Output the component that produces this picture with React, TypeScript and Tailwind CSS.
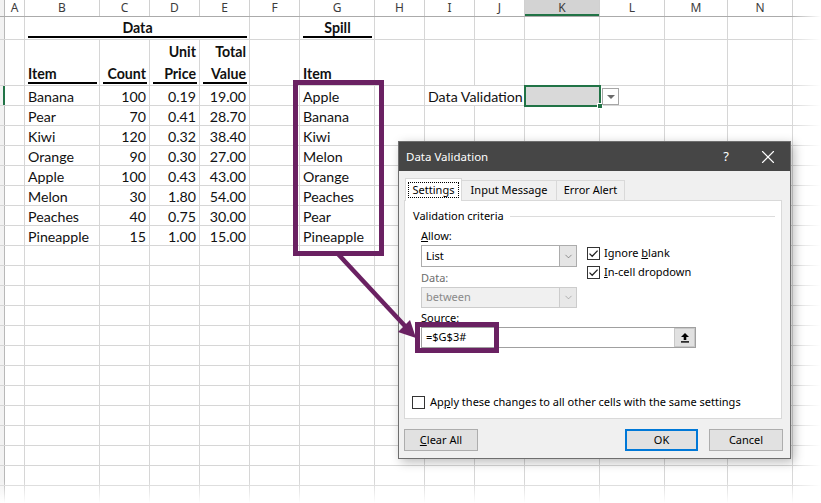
import React from 'react';
import { X, ChevronDown } from 'lucide-react';

const CELL = 'shrink-0 h-full border-r border-[#d6d6d6]';

type R = { item: string; count: string; price: string; total: string; spill: string; sel?: boolean };

const rows: R[] = [
  { item: 'Banana', count: '100', price: '0.19', total: '19.00', spill: 'Apple', sel: true },
  { item: 'Pear', count: '70', price: '0.41', total: '28.70', spill: 'Banana' },
  { item: 'Kiwi', count: '120', price: '0.32', total: '38.40', spill: 'Kiwi' },
  { item: 'Orange', count: '90', price: '0.30', total: '27.00', spill: 'Melon' },
  { item: 'Apple', count: '100', price: '0.43', total: '43.00', spill: 'Orange' },
  { item: 'Melon', count: '30', price: '1.80', total: '54.00', spill: 'Peaches' },
  { item: 'Peaches', count: '40', price: '0.75', total: '30.00', spill: 'Pear' },
  { item: 'Pineapple', count: '15', price: '1.00', total: '15.00', spill: 'Pineapple' },
];

function Rh({ sel }: { sel?: boolean }) {
  return (
    <div
      className={`w-[5px] shrink-0 h-full bg-[#f2f2f2] ${sel ? 'border-r-2 border-[#217346]' : 'border-r border-[#b8b8b8]'}`}
    />
  );
}

function E({ w }: { w: string }) {
  return <div className={`${w} ${CELL}`} />;
}

function Tail() {
  return (
    <>
      <E w="w-[65px]" />
      <E w="w-[63px]" />
      <E w="w-[65px]" />
      <E w="w-[28px]" />
    </>
  );
}

function ColHeader() {
  const cols: [string, string][] = [
    ['A', 'w-[20px]'],
    ['B', 'w-[75px]'],
    ['C', 'w-[50px]'],
    ['D', 'w-[50px]'],
    ['E', 'w-[50px]'],
    ['F', 'w-[50px]'],
    ['G', 'w-[75px]'],
    ['H', 'w-[50px]'],
    ['I', 'w-[50px]'],
    ['J', 'w-[50px]'],
    ['K', 'w-[75px]'],
    ['L', 'w-[65px]'],
    ['M', 'w-[63px]'],
    ['N', 'w-[65px]'],
    ['', 'w-[28px]'],
  ];
  return (
    <div className="flex h-[17px] border-b border-[#ababab] bg-white font-['Noto_Sans'] text-[12px] leading-[16px] text-[#3c3c3c]">
      <div className="w-[5px] shrink-0 h-full bg-[#f2f2f2] border-r border-[#b8b8b8]" />
      {cols.map(([l, w]) => (
        <div
          key={l + w}
          className={`${w} shrink-0 h-full border-r border-[#d0d0d0] flex items-center justify-center ${
            l === 'K' ? 'bg-[#d3d3d3] shadow-[inset_0_-2px_0_#217346]' : ''
          }`}
        >
          {l}
        </div>
      ))}
    </div>
  );
}

function TitleRow() {
  return (
    <div className="flex h-[23px] border-b border-[#d6d6d6] font-bold">
      <Rh />
      <E w="w-[20px]" />
      <div className={`w-[225px] ${CELL} flex flex-col justify-end pl-[3px] pr-[2px] pb-[1px]`}>
        <div className="leading-[16px] text-center">Data</div>
        <div className="h-[2px] bg-black" />
      </div>
      <E w="w-[50px]" />
      <div className={`w-[75px] ${CELL} flex flex-col justify-end pl-[3px] pr-[2px] pb-[1px]`}>
        <div className="leading-[16px] text-center">Spill</div>
        <div className="h-[2px] bg-black" />
      </div>
      <E w="w-[50px]" />
      <E w="w-[50px]" />
      <E w="w-[50px]" />
      <E w="w-[75px]" />
      <Tail />
    </div>
  );
}

function HeadCell({ w, lines, right }: { w: string; lines: string[]; right?: boolean }) {
  return (
    <div className={`${w} ${CELL} flex flex-col justify-end pl-[3px] pr-[2px] pb-[1px]`}>
      <div className={`flex flex-col gap-[6px] ${right ? 'items-end pr-[1px]' : 'items-start'}`}>
        {lines.map((l) => (
          <div key={l} className="leading-[16px]">
            {l}
          </div>
        ))}
      </div>
      <div className="h-[2px] bg-black" />
    </div>
  );
}

function HeaderRow() {
  return (
    <div className="flex h-[46px] border-b border-[#d6d6d6] font-bold">
      <Rh />
      <E w="w-[20px]" />
      <HeadCell w="w-[75px]" lines={['Item']} />
      <HeadCell w="w-[50px]" lines={['Count']} right />
      <HeadCell w="w-[50px]" lines={['Unit', 'Price']} right />
      <HeadCell w="w-[50px]" lines={['Total', 'Value']} right />
      <E w="w-[50px]" />
      <div className={`w-[75px] ${CELL} flex items-end pl-[3px] pb-[3px]`}>
        <div className="leading-[16px]">Item</div>
      </div>
      <E w="w-[50px]" />
      <E w="w-[50px]" />
      <E w="w-[50px]" />
      <E w="w-[75px]" />
      <Tail />
    </div>
  );
}

function DataRow({ r }: { r: R }) {
  const L = `${CELL} flex items-end pl-[3px] whitespace-nowrap`;
  const Rt = `${CELL} flex items-end justify-end pr-[3px]`;
  return (
    <div className="flex h-[20px] border-b border-[#d6d6d6] leading-[16px]">
      <Rh sel={r.sel} />
      <E w="w-[20px]" />
      <div className={`w-[75px] ${L}`}>{r.item}</div>
      <div className={`w-[50px] ${Rt}`}>{r.count}</div>
      <div className={`w-[50px] ${Rt}`}>{r.price}</div>
      <div className={`w-[50px] ${Rt}`}>{r.total}</div>
      <E w="w-[50px]" />
      <div className={`w-[75px] ${L}`}>{r.spill}</div>
      <E w="w-[50px]" />
      {r.sel ? (
        <div className={`w-[100px] ${L}`}>Data Validation</div>
      ) : (
        <>
          <E w="w-[50px]" />
          <E w="w-[50px]" />
        </>
      )}
      {r.sel ? (
        <div className={`w-[75px] ${CELL} relative z-10 bg-[#d9d9d9]`}>
          <div className="absolute -left-[1px] -top-[1px] w-[77px] h-[22px] border-2 border-[#217346]" />
          <div className="absolute left-[72px] top-[17px] w-[6px] h-[6px] bg-[#217346] border border-white" />
          <div className="absolute left-[77px] top-[2px] w-[17px] h-[17px] border border-[#a6a6a6] bg-white flex items-center justify-center">
            <div className="w-0 h-0 border-l-[4px] border-r-[4px] border-t-[4px] border-l-transparent border-r-transparent border-t-[#6b6b6b]" />
          </div>
        </div>
      ) : (
        <E w="w-[75px]" />
      )}
      <Tail />
    </div>
  );
}

function EmptyRow() {
  return (
    <div className="flex h-[20px] border-b border-[#d6d6d6]">
      <Rh />
      <E w="w-[20px]" />
      <E w="w-[75px]" />
      <E w="w-[50px]" />
      <E w="w-[50px]" />
      <E w="w-[50px]" />
      <E w="w-[50px]" />
      <E w="w-[75px]" />
      <E w="w-[50px]" />
      <E w="w-[50px]" />
      <E w="w-[50px]" />
      <E w="w-[75px]" />
      <Tail />
    </div>
  );
}

function Check({ on }: { on?: boolean }) {
  return (
    <div className="w-[13px] h-[13px] border border-[#333] bg-white shrink-0 flex items-center justify-center">
      {on && (
        <svg width="11" height="11" viewBox="0 0 11 11">
          <path d="M1.5 5.6 L4.2 8.3 L9.6 2.6" fill="none" stroke="#222" strokeWidth="1.3" />
        </svg>
      )}
    </div>
  );
}

function Dialog() {
  return (
    <div className="absolute left-[398px] top-[141px] w-[393px] h-[318px] border border-[#6e6e6e] bg-[#f0f0f0] shadow-[3px_3px_10px_rgba(0,0,0,0.28)] flex flex-col font-['Noto_Sans'] text-[11px] text-black z-20">
      <div className="h-[29px] bg-[#464646] flex items-center pl-[7px] text-white text-[11.5px] shrink-0">
        <span>Data Validation</span>
        <span className="ml-auto text-[13px] mr-[28px]">?</span>
        <X size={22} strokeWidth={1.2} color="#ffffff" className="mr-[11px]" />
      </div>
      <div className="flex flex-col pl-[5px]">
        <div className="flex items-end h-[22px] mt-[7px] pl-[1px]">
          <div className="relative z-10 -mb-px h-[23px] w-[57px] bg-white border border-b-0 border-[#d9d9d9] flex items-center justify-center">
            <div className="border border-dotted border-black px-[4px] leading-[14px]">Settings</div>
          </div>
          <div className="h-[20px] w-[95px] border border-l-0 border-b-0 border-[#d9d9d9] flex items-center justify-center">
            Input Message
          </div>
          <div className="h-[20px] w-[68px] border border-l-0 border-b-0 border-[#d9d9d9] flex items-center justify-center">
            Error Alert
          </div>
        </div>
        <div className="w-[378px] h-[219px] bg-white border border-[#d9d9d9] flex flex-col">
          <div className="flex items-center mt-[7px] pl-[8px] pr-[6px] h-[16px]">
            <span>Validation criteria</span>
            <div className="flex-1 h-px bg-[#dcdcdc] ml-[6px]" />
          </div>
          <div className="flex pl-[16px] mt-[4px]">
            <div className="flex flex-col w-[156px]">
              <div className="h-[16px] leading-[16px]">
                <span className="underline">A</span>llow:
              </div>
              <div className="mt-[1px] h-[22px] border border-[#acacac] flex">
                <div className="flex-1 pl-[4px] flex items-center">List</div>
                <div className="w-[17px] bg-[#e5e5e5] border-l border-[#acacac] flex items-center justify-center">
                  <ChevronDown size={11} strokeWidth={1.3} color="#555" />
                </div>
              </div>
              <div className="mt-[3px] h-[16px] leading-[16px] text-[#6d6d6d]">Data:</div>
              <div className="mt-[1px] h-[21px] border border-[#cccccc] bg-[#f0f0f0] flex text-[#8a8a8a]">
                <div className="flex-1 pl-[4px] flex items-center">between</div>
                <div className="w-[17px] bg-[#e8e8e8] border-l border-[#cccccc] flex items-center justify-center">
                  <ChevronDown size={11} strokeWidth={1.3} color="#888" />
                </div>
              </div>
            </div>
            <div className="flex flex-col ml-[10px] mt-[19px] gap-[6px]">
              <div className="flex items-center h-[13px] gap-[4px]">
                <Check on />
                <span>
                  Ignore <span className="underline">b</span>lank
                </span>
              </div>
              <div className="flex items-center h-[13px] gap-[4px]">
                <Check on />
                <span>
                  <span className="underline">I</span>n-cell dropdown
                </span>
              </div>
            </div>
          </div>
          <div className="pl-[16px] mt-[2px] h-[16px] leading-[16px]">Source:</div>
          <div className="ml-[16px] mt-[1px] w-[275px] h-[21px] border border-[#a0a0a0] flex">
            <div className="flex-1 pl-[4px] flex items-center">=$G$3#</div>
            <div className="w-[21px] bg-[#e1e1e1] border border-[#c8c8c8] flex items-center justify-center">
              <svg width="10" height="11" viewBox="0 0 10 11">
                <path d="M5 1 L9 5 L6.3 5 L6.3 8 L3.7 8 L3.7 5 L1 5 Z" fill="#000" />
                <rect x="1" y="9.2" width="8" height="1.4" fill="#000" />
              </svg>
            </div>
          </div>
          <div className="flex items-center pl-[7px] mt-[46px] h-[16px] gap-[5px]">
            <Check />
            <span>
              Ap<span className="underline">p</span>ly these changes to all other cells with the same settings
            </span>
          </div>
        </div>
        <div className="flex w-[379px] mt-[10px] h-[22px]">
          <div className="w-[74px] h-[22px] bg-[#e1e1e1] border border-[#adadad] flex items-center justify-center">
            <span>
              <span className="underline">C</span>lear All
            </span>
          </div>
          <div className="ml-auto w-[73px] h-[22px] bg-[#e1e1e1] border-2 border-[#0078d7] flex items-center justify-center">
            OK
          </div>
          <div className="ml-[11px] w-[74px] h-[22px] bg-[#e1e1e1] border border-[#adadad] flex items-center justify-center">
            Cancel
          </div>
        </div>
      </div>
    </div>
  );
}

export default function App() {
  return (
    <div className="relative w-[821px] h-[503px] overflow-hidden bg-white font-['Lato'] text-[14.2px] text-[#111]">
      <ColHeader />
      <TitleRow />
      <HeaderRow />
      {rows.map((r) => (
        <DataRow key={r.item} r={r} />
      ))}
      {Array.from({ length: 13 }).map((_, i) => (
        <EmptyRow key={i} />
      ))}

      <div className="absolute right-0 top-0 w-[30px] h-full bg-linear-to-r from-white/0 to-white z-10" />
      <div className="absolute left-0 bottom-0 w-full h-[22px] bg-linear-to-b from-white/0 to-white z-10" />

      <Dialog />

      <div className="absolute left-[293px] top-[80px] w-[91px] h-[176px] border-[5px] border-[#6a2162] z-30" />
      <div className="absolute left-[415px] top-[322px] w-[84px] h-[31px] border-[5px] border-[#6a2162] z-30" />
      <svg className="absolute left-0 top-0 z-30 pointer-events-none" width="821" height="503">
        <line x1="338" y1="254" x2="405" y2="326" stroke="#6a2162" strokeWidth="4.5" />
        <polygon points="416,338 398,332 410,320" fill="#6a2162" />
      </svg>
    </div>
  );
}
